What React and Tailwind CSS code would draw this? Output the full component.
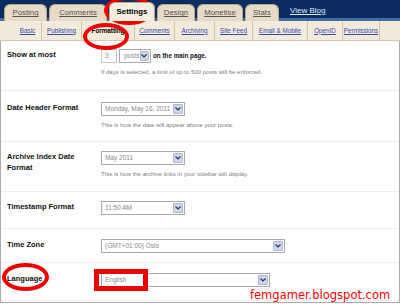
import React from "react";

const font = { fontFamily: '"Liberation Sans", Arial, sans-serif' };

function Arrow() {
  return (
    <span className="flex h-[10px] w-[10px] items-center justify-center rounded-[1px] border border-[#aeb9d4] bg-[#cdd6ea]">
      <svg width="6" height="4" viewBox="0 0 6 4">
        <path d="M0.5 0.5 L3 3 L5.5 0.5" fill="none" stroke="#2b3a5a" strokeWidth="1.2" />
      </svg>
    </span>
  );
}

function Select({ value, width }) {
  return (
    <div
      className="flex h-[14px] items-center justify-between border border-[#a9a9a9] bg-white pl-[3px] pr-[1px] text-[6.5px] text-[#8a8a8a]"
      style={{ width }}
    >
      <span className="whitespace-nowrap">{value}</span>
      <Arrow />
    </div>
  );
}

function Row({ label, height, pt = "pt-[10px]", children }) {
  return (
    <div className={"flex border-b border-[#ececec] " + pt} style={{ height }}>
      <div className="w-[100px] pl-[6px] text-[7.5px] font-bold leading-[11px] text-[#111]">{label}</div>
      <div className="flex flex-col">{children}</div>
    </div>
  );
}

function Help({ children }) {
  return <div className="mt-[5px] whitespace-nowrap text-[6px] leading-[8px] text-[#808080]">{children}</div>;
}

const tabs = [
  { t: "Posting", w: "w-[43px]" },
  { t: "Comments", w: "w-[58px]" },
  { t: "Settings", w: "w-[46px]", active: true },
  { t: "Design", w: "w-[38px]" },
  { t: "Monetise", w: "w-[46px]" },
  { t: "Stats", w: "w-[34px]" },
];

const subs = [
  { t: "Basic", w: "w-[28px]" },
  { t: "Publishing", w: "w-[40px]" },
  { t: "Formatting", w: "w-[53px]", active: true },
  { t: "Comments", w: "w-[40px]" },
  { t: "Archiving", w: "w-[40px]" },
  { t: "Site Feed", w: "w-[38px]" },
  { t: "Email & Mobile", w: "w-[55px]" },
  { t: "OpenID", w: "w-[35px]" },
  { t: "Permissions", w: "w-[37px]" },
];

export default function App() {
  return (
    <div className="relative h-[304px] w-[400px] overflow-hidden bg-white" style={font}>
      {/* top tabs */}
      <div className="flex h-[21px] items-end gap-[2px] border-b-[3px] border-[#4468a2] bg-[#0b2d63] pl-[4px]">
        {tabs.map((tab) => (
          <div
            key={tab.t}
            className={
              "-mb-[3px] flex h-[17px] items-center justify-center rounded-t-[6px] border border-b-0 border-[#b9a989] text-[7.8px] " +
              tab.w +
              (tab.active
                ? " z-10 h-[19px] bg-[#f4eee2] font-bold text-black"
                : " bg-[#e6dbc6] text-[#555] underline")
            }
          >
            {tab.t}
          </div>
        ))}
        <div className="mb-[1px] ml-[9px] text-[8px] leading-[12px] text-[#dfe8ff] underline">View Blog</div>
      </div>

      {/* sub tabs */}
      <div className="flex h-[20px] items-stretch border-b border-[#d6c9ad] bg-[#f2eadb] pl-[14px]">
        {subs.map((s) => (
          <div
            key={s.t}
            className={
              "flex items-center justify-center border-r border-[#d3c5a7] text-[6.3px] whitespace-nowrap " +
              s.w +
              (s.active ? " font-bold text-black" : " text-[#3748b0] underline")
            }
          >
            {s.t}
          </div>
        ))}
      </div>

      {/* settings form */}
      <div className="h-[262px] border-x border-b border-[#ababab]">
        <Row label="Show at most" height="50px" pt="pt-[8px]">
          <div className="flex items-center gap-[2px]">
            <div className="flex h-[14px] w-[16px] items-center border border-[#c4c4c4] pl-[3px] text-[6.5px] text-[#888]">3</div>
            <div className="flex h-[14px] w-[32px] items-center justify-between border border-[#a9a9a9] pl-[4px] pr-[1px] text-[6.5px] text-[#8a8a8a]">
              posts
              <Arrow />
            </div>
            <span className="text-[6.3px] font-bold text-[#111]">on the main page.</span>
          </div>
          <Help>If days is selected, a limit of up to 500 posts will be enforced.</Help>
        </Row>
        <Row label="Date Header Format" height="51px" pt="pt-[11px]">
          <Select value="Monday, May 16, 2011" width="84px" />
          <Help>This is how the date will appear above your posts.</Help>
        </Row>
        <Row label={<>Archive Index Date<br />Format</>} height="50px" pt="pt-[9px]">
          <Select value="May 2011" width="84px" />
          <Help>This is how the archive links in your sidebar will display.</Help>
        </Row>
        <Row label="Timestamp Format" height="37px" pt="pt-[9px]">
          <Select value="11:50 AM" width="84px" />
        </Row>
        <Row label="Time Zone" height="34px" pt="pt-[10px]">
          <Select value="(GMT+01:00) Oslo" width="184px" />
        </Row>
        <Row label="Language" height="38px" pt="pt-[10px]">
          <Select value="English" width="169px" />
        </Row>
      </div>

      {/* annotations */}
      <div className="absolute left-[104px] top-[-4px] h-[29px] w-[50px] rounded-[50%] border-[4px] border-[#ee0000]" />
      <div className="absolute left-[83px] top-[23px] h-[27px] w-[46px] rounded-[50%] border-[4px] border-[#ee0000]" />
      <div className="absolute left-[2px] top-[263px] h-[28px] w-[47px] rounded-[50%] border-[4px] border-[#ee0000]" />
      <div className="absolute left-[94px] top-[269px] h-[22px] w-[54px] border-[5px] border-[#ee0000]" />
      <div
        className="absolute left-[250px] top-[288px] text-[11.5px] leading-[14px] text-[#ff0000]"
        style={{ fontFamily: '"DejaVu Sans", Verdana, sans-serif' }}
      >
        femgamer.blogspot.com
      </div>
    </div>
  );
}
